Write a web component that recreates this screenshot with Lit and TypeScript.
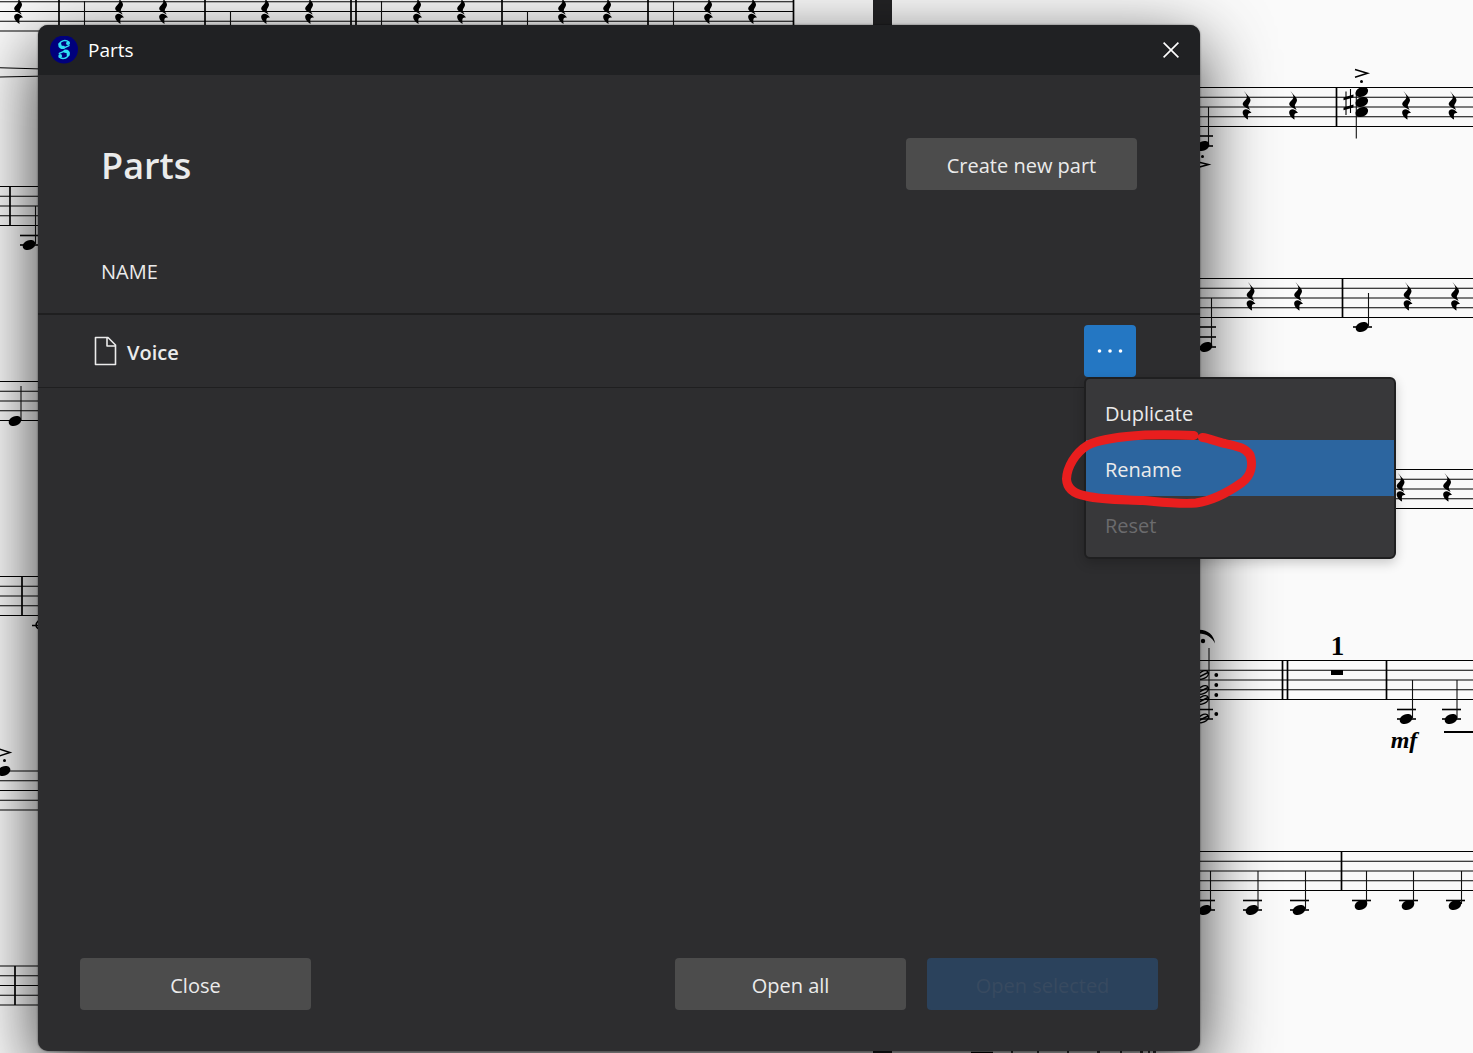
import { LitElement, html, svg, css } from "lit";
import { customElement, property, state } from "lit/decorators.js";

type Point = [number, number];

interface Staff {
  top: number;
  from: number;
  to: number;
  bars: number[];
}

interface Note {
  x: number;
  y: number;
  stem: number;
  stemTo: number;
  ledgers: number[];
}

const FAR = 6000;
const LINE_GAP = 9.75;

const STAVES: Staff[] = [
  { top: -8, from: 0, to: 794, bars: [59, 205, 351, 356, 502, 648, 793.5] },
  { top: 186.5, from: 0, to: 600, bars: [10] },
  { top: 381.5, from: 0, to: 600, bars: [] },
  { top: 576.5, from: 0, to: 600, bars: [22] },
  { top: 771, from: 0, to: 600, bars: [] },
  { top: 966, from: 0, to: 600, bars: [15] },
  { top: 87.5, from: 1000, to: FAR, bars: [1336.5] },
  { top: 278.5, from: 1000, to: FAR, bars: [1342.5] },
  { top: 469.5, from: 1000, to: FAR, bars: [] },
  { top: 660.5, from: 1000, to: FAR, bars: [1282.5, 1287.5, 1386.5] },
  { top: 851.5, from: 1000, to: FAR, bars: [1341.5] },
];

const RESTS: Point[] = [
  ...[18, 119, 163, 265, 309, 417, 461, 562, 607, 708, 752].map((x): Point => [x, 10]),
  ...[1246.5, 1293, 1406, 1452.5].map((x): Point => [x, 105.5]),
  ...[1250.5, 1298, 1407.5, 1455].map((x): Point => [x, 296.5]),
  ...[1400.5, 1447].map((x): Point => [x, 487.5]),
];

const NOTES: Note[] = [
  { x: 29, y: 245, stem: 35.5, stemTo: 206, ledgers: [235.5, 245] },
  { x: 15, y: 421, stem: 21, stemTo: 386, ledgers: [] },
  { x: 4, y: 771, stem: -2, stemTo: 800, ledgers: [] },
  { x: 1203, y: 146, stem: 1208.5, stemTo: 107, ledgers: [136, 146] },
  { x: 1206, y: 347, stem: 1211.5, stemTo: 298, ledgers: [327, 337, 347] },
  { x: 1362, y: 327, stem: 1368.5, stemTo: 293, ledgers: [327] },
  { x: 1406, y: 719, stem: 1412.5, stemTo: 680, ledgers: [709.5, 719] },
  { x: 1451, y: 719, stem: 1457, stemTo: 680, ledgers: [709.5, 719] },
  { x: 1205, y: 910, stem: 1210.5, stemTo: 871, ledgers: [900.5, 910] },
  { x: 1252, y: 910, stem: 1258, stemTo: 871, ledgers: [900.5, 910] },
  { x: 1299, y: 910, stem: 1305.5, stemTo: 871, ledgers: [900.5, 910] },
  { x: 1361, y: 905, stem: 1366.5, stemTo: 871, ledgers: [900.5] },
  { x: 1408, y: 905, stem: 1413.5, stemTo: 871, ledgers: [900.5] },
  { x: 1455, y: 905, stem: 1461.5, stemTo: 871, ledgers: [900.5] },
];

/** Score pages that lie on the canvas behind the dialog. */
@customElement("score-canvas")
export class ScoreCanvas extends LitElement {
  static styles = css`
    :host {
      display: block;
      overflow: hidden;
      background: #fafafa;
    }
    .score {
      display: block;
      width: 100%;
      height: 100%;
    }
    .line {
      stroke: #000;
      stroke-width: 1.1;
      fill: none;
    }
    .bar {
      stroke: #000;
      stroke-width: 1.7;
    }
    .stem {
      stroke: #111;
      stroke-width: 1.1;
    }
    .ledger {
      stroke: #000;
      stroke-width: 1.6;
    }
    .accent {
      fill: none;
      stroke: #000;
      stroke-width: 1.5;
    }
    .gutter {
      fill: #232325;
    }
    .count {
      font: 700 27px "Liberation Serif", serif;
      text-anchor: middle;
    }
    .dynamic {
      font: italic 700 24px "Liberation Serif", serif;
      text-anchor: middle;
    }
  `;

  private staff(s: Staff) {
    return svg`
      ${[0, 1, 2, 3, 4].map(
        (i) => svg`<line class="line" x1=${s.from} x2=${s.to} y1=${s.top + i * LINE_GAP} y2=${s.top + i * LINE_GAP}></line>`
      )}
      ${s.bars.map(
        (x) => svg`<line class="bar" x1=${x} x2=${x} y1=${s.top} y2=${s.top + 4 * LINE_GAP}></line>`
      )}`;
  }

  private rest([x, y]: Point) {
    return svg`<path transform="translate(${x} ${y})"
      d="M-2.600-14.600L3-8C4.400-5.800 4.300-4.600 3-2.600C1.400-.4 1.400 .6 3 3.200L3.600 4.600L-1.600 1.600C-4-.4-4.400-1.600-3-3.400C-1-5.600 .6-7 .4-9C.2-11-1.200-12.600-2.600-14.600Z
         M5 7.600C2.800 7 1.600 8 1.400 9.600C1.200 11.200 1.400 12.400 1.600 14C-1.600 12.400-4.200 9.200-3.800 6.200C-3 2.600 2.400 2.800 5 7.600Z"></path>`;
  }

  private head(x: number, y: number) {
    return svg`<ellipse cx=${x} cy=${y} rx="6.600" ry="4.700" transform="rotate(-24 ${x} ${y})"></ellipse>`;
  }

  private note(n: Note) {
    return svg`
      ${n.ledgers.map((y) => svg`<line class="ledger" x1=${n.x - 9} x2=${n.x + 10} y1=${y} y2=${y}></line>`)}
      <line class="stem" x1=${n.stem} x2=${n.stem} y1=${n.y - 1} y2=${n.stemTo}></line>
      ${this.head(n.x, n.y)}`;
  }

  render() {
    return html`
      <svg class="score" aria-hidden="true">
        <rect class="gutter" x="873" y="0" width="19" height="100%"></rect>
        ${STAVES.map((s) => this.staff(s))}
        ${RESTS.map((r) => this.rest(r))}
        ${NOTES.map((n) => this.note(n))}

        ${[84, 381, 673].map((x) => svg`<line class="stem" x1=${x + 0.5} x2=${x + 0.5} y1="1" y2="40"></line>`)}
        ${[230, 527].map((x) => svg`<line class="stem" x1=${x + 0.5} x2=${x + 0.5} y1="11" y2="40"></line>`)}

        <path class="line" d="M0 67.700L60 69.500M0 77L60 75.800"></path>
        <path class="accent" d="M32 625.500H44M39 620C35 624 35 627 39 629"></path>
        <path class="accent" d="M-2 748.500L10 752.500L-2 756.500"></path>
        <circle cx="4.500" cy="760.500" r="1.500"></circle>

        <circle cx="1202.500" cy="156.500" r="1.500"></circle>
        <path class="accent" d="M1196 161.500L1208.500 164.500L1196 168"></path>

        <path class="accent" d="M1355 69.500L1367.500 73.300L1355 77.200"></path>
        <circle cx="1361.500" cy="81.500" r="1.500"></circle>
        <line class="stem" x1="1356.300" x2="1356.300" y1="93" y2="138.500"></line>
        ${[92, 102, 112].map((y) => this.head(1361.8, y))}
        <path class="line" d="M1346 91.500V115M1350.500 89V113"></path>
        <path d="M1343.500 97.500L1353.500 94.600V97.400L1343.500 100.300ZM1343.500 107.500L1353.500 104.600V107.400L1343.500 110.300Z"></path>

        <path d="M1190 632C1202 626 1214 632 1215 643.500C1211 635 1202 631 1190 635Z"></path>
        <circle cx="1203" cy="641" r="2.200"></circle>
        <line class="stem" x1="1209" x2="1209" y1="648" y2="719"></line>
        ${[675, 690, 700, 718.5].map(
          (y) => svg`<ellipse class="accent" cx="1203" cy=${y} rx="5.800" ry="3.600" transform="rotate(-28 1203 ${y})"></ellipse>
            <line class="accent" x1="1198" x2="1208" y1=${y + 2.5} y2=${y - 2.5}></line>`
        )}
        <path class="ledger" d="M1194 709.500H1213M1194 719H1213"></path>
        ${[675, 685, 695, 714].map((y) => svg`<circle cx="1216.300" cy=${y} r="1.900"></circle>`)}

        <text class="count" x="1337.500" y="655">1</text>
        <rect x="1331" y="670" width="12" height="5"></rect>
        <text class="dynamic" x="1404" y="748">mf</text>
        <rect x="1444" y="731" width="5000" height="2"></rect>

        <path class="bar" d="M971 1052.500H993M1011 1052H1013M1037 1052H1039M1067 1052H1069M1097 1052H1100M1120 1052H1122M1140 1052H1143M1148 1052H1150M1153 1052H1156"></path>
      </svg>
    `;
  }
}

/** Square "more" button of a part, with the drop-down menu it opens. */
@customElement("part-menu")
export class PartMenu extends LitElement {
  @property({ type: String }) part_name = "";
  @state() private open = true;
  @state() private current = "Rename";

  private items = [
    { label: "Duplicate", disabled: false },
    { label: "Rename", disabled: false },
    { label: "Reset", disabled: true },
  ];

  static styles = css`
    :host {
      display: inline-block;
      position: relative;
      vertical-align: middle;
    }
    .more {
      display: grid;
      place-items: center;
      width: 52px;
      height: 52px;
      padding: 0;
      border: 0;
      border-radius: 4px;
      background: #2477c3;
      color: #fff;
      cursor: pointer;
    }
    .menu {
      position: absolute;
      top: 100%;
      left: 0;
      z-index: 2;
      display: flex;
      flex-direction: column;
      box-sizing: border-box;
      width: 312px;
      padding: 5px 0;
      border: 2px solid #1f1f20;
      border-radius: 6px;
      background: #38383a;
      box-shadow: 0 4px 12px rgba(0, 0, 0, 0.2);
    }
    .item {
      height: 56px;
      padding: 4px 19px 0;
      border: 0;
      background: none;
      color: #ebebeb;
      font: inherit;
      line-height: 28px;
      text-align: left;
      cursor: pointer;
    }
    .item.current {
      background: #2c659f;
    }
    .item:disabled {
      color: #6b6b6d;
      cursor: default;
    }
    .marker {
      position: absolute;
      top: 46px;
      left: -30px;
      overflow: visible;
      pointer-events: none;
    }
  `;

  render() {
    return html`
      <button
        class="more"
        type="button"
        aria-label="More options for ${this.part_name}"
        aria-haspopup="menu"
        aria-expanded=${this.open ? "true" : "false"}
        @click=${() => (this.open = !this.open)}
      >
        <svg width="28" height="6" viewBox="0 0 28 6" fill="currentColor" aria-hidden="true">
          <circle cx="3.500" cy="3" r="1.800"></circle>
          <circle cx="14" cy="3" r="1.800"></circle>
          <circle cx="24.500" cy="3" r="1.800"></circle>
        </svg>
      </button>
      ${this.open
        ? html`<div class="menu" role="menu">
            ${this.items.map(
              (item) => html`<button
                class="item ${item.label === this.current ? "current" : ""}"
                type="button"
                role="menuitem"
                ?disabled=${item.disabled}
                @mouseenter=${() => (this.current = item.label)}
              >
                ${item.label}
              </button>`
            )}
            <svg
              class="marker"
              width="200"
              height="84"
              viewBox="1056 425 200 84"
              fill="none"
              stroke="#e81e1e"
              stroke-width="9"
              stroke-linecap="round"
              stroke-linejoin="round"
              aria-hidden="true"
            >
              <path
                d="M1194 435.500C1176 434.500 1158 434.500 1145 435C1124 436.500 1100 438.500 1088 445C1075 453 1067 467 1066.500 479C1067 489 1074 494 1086 496C1103 500 1125 499.500 1143 500.500C1160 502 1180 504.500 1196 503C1214 500.500 1230 491 1242 482.500C1252 475 1253 464 1250 455C1245 447 1235 446 1225 443.500C1217 442 1209 438 1202.500 437.500"
              ></path>
            </svg>
          </div>`
        : null}
    `;
  }
}

@customElement("app-root")
export class AppRoot extends LitElement {
  @state() private parts = ["Voice"];

  static styles = css`
    :host {
      display: flex;
      flex-direction: column;
      position: relative;
      box-sizing: border-box;
      min-height: 100vh;
      padding: 25px 273px 2px 38px;
      overflow: hidden;
      color: #ebebeb;
      font-family: "Open Sans", "Noto Sans", sans-serif;
      font-size: 20px;
      line-height: 28px;
    }
    .backdrop {
      position: absolute;
      inset: 0;
    }
    .dialog {
      position: relative;
      flex: 1;
      display: flex;
      flex-direction: column;
      border-radius: 10px;
      background: #2d2d2f;
      box-shadow: 0 0 2px rgba(0, 0, 0, 0.6), 0 22px 70px rgba(0, 0, 0, 0.8);
    }
    .titlebar {
      display: flex;
      align-items: center;
      gap: 10px;
      box-sizing: border-box;
      height: 50px;
      padding: 0 13px 0 12px;
      border-radius: 10px 10px 0 0;
      background: #202123;
      color: #fff;
    }
    .caption {
      flex: 1;
      font-size: 19px;
    }
    .dismiss {
      display: grid;
      place-items: center;
      width: 32px;
      height: 32px;
      padding: 0;
      border: 0;
      background: none;
      color: inherit;
      cursor: pointer;
    }
    .header {
      display: flex;
      align-items: center;
      justify-content: space-between;
      padding: 63px 63px 41px;
    }
    .heading {
      margin: 0;
      padding-top: 4px;
      font-size: 36px;
      line-height: 48px;
      font-weight: 600;
    }
    .button {
      width: 231px;
      height: 52px;
      padding: 4px 0 0;
      border: 0;
      border-radius: 4px;
      background: #4c4c4c;
      color: #ebebeb;
      font: inherit;
      cursor: pointer;
    }
    .button.primary:disabled {
      background: #2b425c;
      color: #384a60;
      cursor: default;
    }
    .parts {
      width: 100%;
      border-spacing: 0;
    }
    .column {
      height: 82px;
      padding: 0 63px;
      border-bottom: 2px solid #1f1f20;
      font-weight: 400;
      text-align: left;
    }
    .cell {
      height: 72px;
      padding: 0 56px;
      border-bottom: 1px solid #1f1f20;
    }
    .cell.actions {
      padding: 0 64px 0 0;
      text-align: right;
    }
    .name {
      display: flex;
      align-items: center;
      gap: 10px;
      font-weight: 600;
    }
    .label {
      padding-top: 4px;
    }
    .footer {
      display: flex;
      gap: 21px;
      margin-top: auto;
      padding: 0 42px 41px;
    }
    .spacer {
      flex: 1;
    }
  `;

  render() {
    return html`
      <score-canvas class="backdrop"></score-canvas>
      <section class="dialog" role="dialog" aria-labelledby="caption">
        <div class="titlebar">
          <svg width="28" height="28" viewBox="0 0 28 28" aria-hidden="true">
            <circle cx="14" cy="13.500" r="14" fill="#00007c"></circle>
            <g fill="none" stroke="#2fe0f5" stroke-linecap="round">
              <path stroke-width="1.400" d="M19 6.200C16.500 3.800 11 3.800 9.500 8"></path>
              <path stroke-width="3.200" d="M9.800 8.400C9.600 10.800 11.600 11.600 13.400 11.400"></path>
              <path stroke-width="1.400" d="M13.600 12.200L19 9.600M9.300 17.400L15 14.800"></path>
              <path stroke-width="3.200" d="M15 15.200C17.800 15.200 18.800 16.500 18.200 18.600"></path>
              <path stroke-width="1.400" d="M18.400 19C17 23.100 11.500 23.200 9.300 21"></path>
            </g>
            <circle cx="18" cy="7.200" r="1.900" fill="#2fe0f5"></circle>
            <circle cx="10.200" cy="20" r="1.900" fill="#2fe0f5"></circle>
          </svg>
          <span class="caption" id="caption">Parts</span>
          <button class="dismiss" type="button" aria-label="Close window">
            <svg width="16" height="16" viewBox="0 0 16 16" fill="none" stroke="currentColor" stroke-width="1.600" aria-hidden="true">
              <path d="M.6 .6L15.400 15.400M15.400 .6L.6 15.400"></path>
            </svg>
          </button>
        </div>

        <header class="header">
          <h1 class="heading">Parts</h1>
          <button class="button" type="button">Create new part</button>
        </header>

        <table class="parts">
          <thead>
            <tr>
              <th class="column" scope="col" colspan="2">NAME</th>
            </tr>
          </thead>
          <tbody>
            ${this.parts.map(
              (name) => html`<tr>
                <td class="cell">
                  <span class="name">
                    <svg width="23" height="30" viewBox="0 0 23 30" fill="none" stroke="currentColor" stroke-width="1.600" stroke-linejoin="round" aria-hidden="true">
                      <path d="M1.500 1.500H14L21.500 9V28.500H1.500ZM13 1.500V10H21.500"></path>
                    </svg>
                    <span class="label">${name}</span>
                  </span>
                </td>
                <td class="cell actions"><part-menu .part_name=${name}></part-menu></td>
              </tr>`
            )}
          </tbody>
        </table>

        <footer class="footer">
          <button class="button" type="button">Close</button>
          <span class="spacer"></span>
          <button class="button" type="button">Open all</button>
          <button class="button primary" type="button" disabled>Open selected</button>
        </footer>
      </section>
    `;
  }
}
